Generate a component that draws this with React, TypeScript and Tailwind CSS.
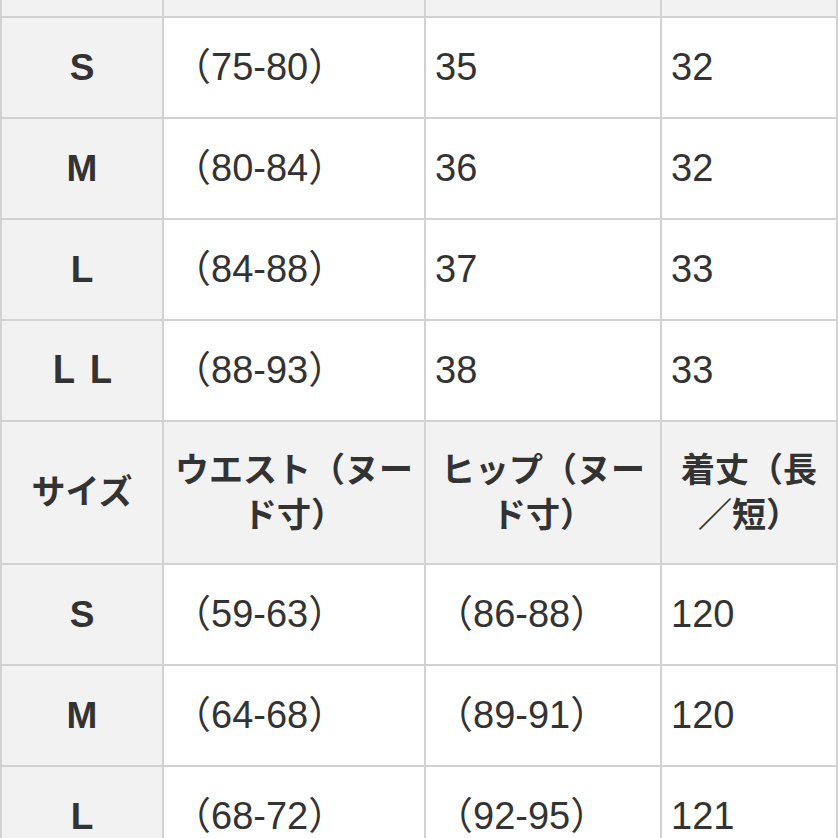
const font = "font-['Liberation_Sans','Noto_Sans_CJK_JP',sans-serif]";

type Row = { size: string; a: string; b: string; c: string };

const topRows: Row[] = [
  { size: "S", a: "（75-80）", b: "35", c: "32" },
  { size: "M", a: "（80-84）", b: "36", c: "32" },
  { size: "L", a: "（84-88）", b: "37", c: "33" },
  { size: "ＬＬ", a: "（88-93）", b: "38", c: "33" },
];

const bottomRows: Row[] = [
  { size: "S", a: "（59-63）", b: "（86-88）", c: "120" },
  { size: "M", a: "（64-68）", b: "（89-91）", c: "120" },
  { size: "L", a: "（68-72）", b: "（92-95）", c: "121" },
];

const SizeCell = ({ label }: { label: string }) => (
  <div className="h-[99px] bg-[#f2f2f2] flex items-center justify-center text-[37px] font-bold text-[#333]">
    {label}
  </div>
);

const DataCell = ({ value }: { value: string }) => (
  <div className="h-[99px] bg-white flex items-center px-[9px] text-[38px] text-[#333]">
    {value}
  </div>
);

const HeadCell = ({ children }: { children: string }) => (
  <div className="h-[141px] bg-[#f2f2f2] flex items-center justify-center px-[9px] text-center text-[34px] leading-[45px] font-bold text-[#333]">
    <span>{children}</span>
  </div>
);

const DataRow = ({ row }: { row: Row }) => (
  <>
    <SizeCell label={row.size} />
    <DataCell value={row.a} />
    <DataCell value={row.b} />
    <DataCell value={row.c} />
  </>
);

export default function App() {
  return (
    <div className={`w-[838px] h-[838px] overflow-hidden bg-white ${font}`}>
      <div className="grid grid-cols-[160px_260px_234px_174px] gap-[2px] px-[2px] bg-[#d2d2d2]">
        <div className="h-[16px] bg-[#f2f2f2]" />
        <div className="h-[16px] bg-[#f2f2f2]" />
        <div className="h-[16px] bg-[#f2f2f2]" />
        <div className="h-[16px] bg-[#f2f2f2]" />
        {topRows.map((r) => (
          <DataRow key={"t" + r.size} row={r} />
        ))}
        <HeadCell>サイズ</HeadCell>
        <HeadCell>ウエスト（ヌード寸）</HeadCell>
        <HeadCell>ヒップ（ヌード寸）</HeadCell>
        <HeadCell>着丈（長／短）</HeadCell>
        {bottomRows.map((r) => (
          <DataRow key={"b" + r.size} row={r} />
        ))}
      </div>
    </div>
  );
}
